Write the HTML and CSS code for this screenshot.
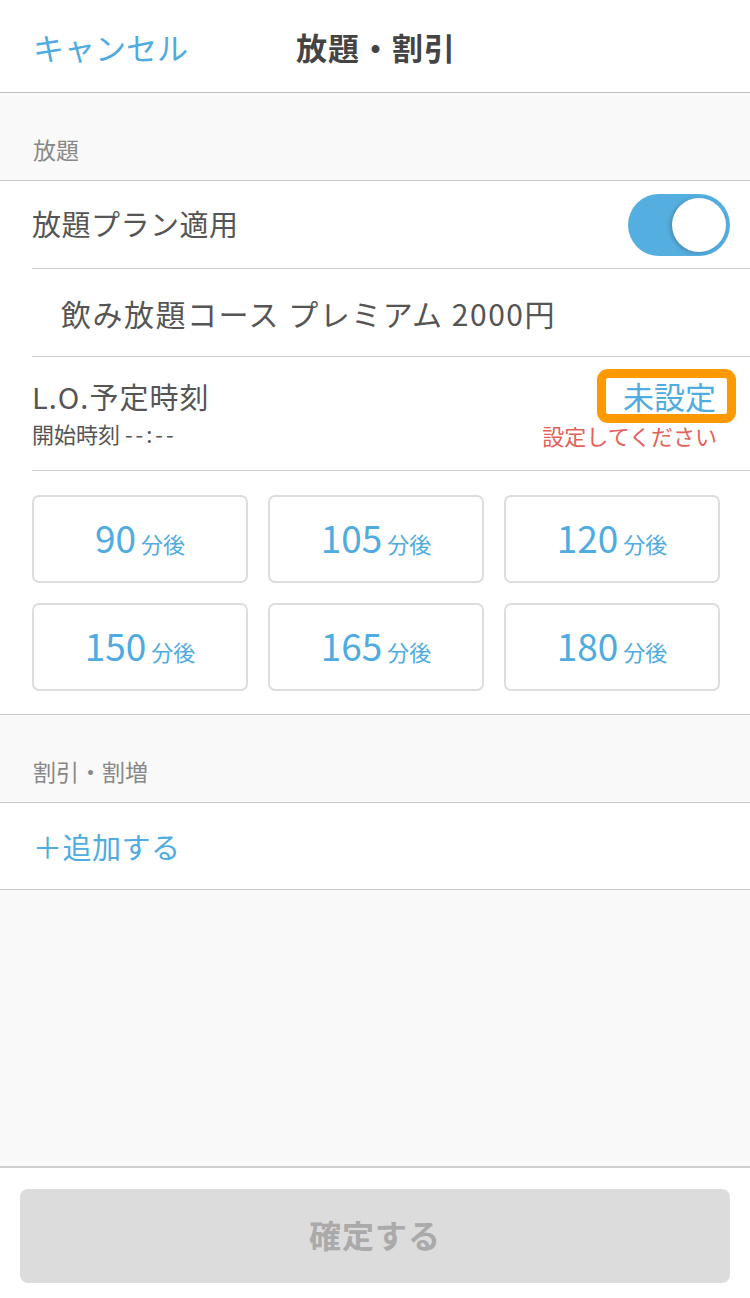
FILE: index.html
```html
<!DOCTYPE html>
<html lang="ja">
<head>
    <meta charset="UTF-8">
    <meta name="viewport" content="width=device-width, initial-scale=1.0">
    <title>放題・割引</title>
    <link rel="stylesheet" href="styles.css">
</head>
<body>
    <div class="screen">
        <header class="nav">
            <a class="nav-cancel">キャンセル</a>
            <h1 class="nav-title">放題・割引</h1>
        </header>

        <main class="content">
            <div class="section-head">放題</div>
            <div class="group">
                <div class="row row-toggle">
                    <span class="row-label">放題プラン適用</span>
                    <div class="toggle on"><div class="knob"></div></div>
                </div>
                <div class="row row-plan">
                    <span class="row-label">飲み放題コース プレミアム 2000円</span>
                </div>
                <div class="row row-lo">
                    <div class="lo-left">
                        <div class="row-label">L.O.予定時刻</div>
                        <div class="lo-sub">開始時刻 <span class="lo-time">--:--</span></div>
                    </div>
                    <div class="lo-right">
                        <span class="lo-value">未設定</span>
                        <span class="lo-warn">設定してください</span>
                    </div>
                </div>
                <div class="time-grid">
                    <button class="time-btn"><b>90</b>分後</button>
                    <button class="time-btn"><b>105</b>分後</button>
                    <button class="time-btn"><b>120</b>分後</button>
                    <button class="time-btn"><b>150</b>分後</button>
                    <button class="time-btn"><b>165</b>分後</button>
                    <button class="time-btn"><b>180</b>分後</button>
                </div>
            </div>

            <div class="section-head">割引・割増</div>
            <div class="group">
                <div class="row row-add">
                    <span class="add-link">＋追加する</span>
                </div>
            </div>
        </main>

        <footer class="footer">
            <button class="confirm" disabled>確定する</button>
        </footer>
    </div>
</body>
</html>
```

FILE: styles.css
```css
body {
    margin: 0;
    font-family: "Noto Sans CJK JP", "Noto Sans", sans-serif;
    color: #555;
}

.screen {
    width: 750px;
    height: 1298px;
    display: flex;
    flex-direction: column;
    background: #f9f9f9;
}

.nav {
    height: 92px;
    border-bottom: 1px solid #bdbdbd;
    background: #fff;
    display: flex;
    align-items: center;
    padding-left: 33px;
}

.nav-cancel {
    color: #4fabe0;
    font-size: 31px;
    width: 263px;
}

.nav-title {
    margin: 0;
    font-size: 31px;
    font-weight: bold;
    color: #444;
    letter-spacing: 1px;
}

.content {
    flex: 1;
    border-bottom: 2px solid #cfcfcf;
}

.section-head {
    height: 87px;
    box-sizing: border-box;
    padding: 39px 0 0 33px;
    font-size: 23px;
    color: #888;
}

.group {
    background: #fff;
    border-top: 1px solid #c8c8c8;
    border-bottom: 1px solid #c8c8c8;
}

.row {
    margin-left: 32px;
    border-bottom: 1px solid #cfcfcf;
    display: flex;
    align-items: center;
}

.row-label {
    font-size: 29px;
    color: #555;
    letter-spacing: 0.5px;
}

.row-toggle {
    height: 87px;
    justify-content: space-between;
    padding-right: 20px;
}

.row-toggle .row-label {
    margin-top: -3px;
}

.toggle {
    width: 102px;
    height: 62px;
    border-radius: 31px;
    background: #55aee0;
    position: relative;
}

.toggle .knob {
    position: absolute;
    right: 4px;
    top: 4px;
    width: 54px;
    height: 54px;
    border-radius: 50%;
    background: #fff;
    box-shadow: -2px 1px 4px rgba(0, 0, 0, 0.2);
}

.row-plan {
    height: 87px;
    padding-left: 29px;
}

.row-plan .row-label {
    font-size: 30px;
    letter-spacing: 1.5px;
}

.row-lo {
    height: 113px;
    justify-content: space-between;
    align-items: flex-start;
    padding-right: 33px;
}

.lo-left {
    padding-top: 18px;
}

.lo-left .row-label {
    letter-spacing: 1px;
}

.lo-sub {
    font-size: 22px;
    color: #555;
    margin-top: 0;
}

.lo-time {
    letter-spacing: 3px;
}

.lo-right {
    display: flex;
    flex-direction: column;
    align-items: flex-end;
    padding-top: 12px;
}

.lo-value {
    font-size: 31px;
    color: #4fabe0;
    border: 9px solid #ff9900;
    border-radius: 11px;
    padding: 0 11px 0 17px;
    line-height: 36px;
    margin-right: -19px;
}

.lo-warn {
    font-size: 22px;
    color: #e36058;
    margin-top: -2px;
    line-height: 28px;
}

.time-grid {
    display: grid;
    grid-template-columns: repeat(3, 216px);
    gap: 20px 20px;
    padding: 24px 0 23px 32px;
}

.time-btn {
    height: 88px;
    background: #fff;
    border: 2px solid #ddd;
    border-radius: 7px;
    color: #4fabe0;
    font-family: inherit;
    font-size: 22px;
    display: flex;
    align-items: baseline;
    justify-content: center;
    padding-top: 18px;
    box-sizing: border-box;
}

.time-btn b {
    font-weight: normal;
    font-size: 37px;
    margin-right: 5px;
    line-height: 44px;
}

.row-add {
    height: 86px;
    border-bottom: none;
    margin-left: 33px;
}

.add-link {
    font-size: 29px;
    color: #4fabe0;
    letter-spacing: 0.5px;
}

.footer {
    height: 130px;
    background: #fff;
    padding: 21px 20px 0;
    box-sizing: border-box;
}

.confirm {
    width: 710px;
    height: 94px;
    border: none;
    border-radius: 8px;
    background: #dcdcdc;
    color: #aaa;
    font-family: inherit;
    font-size: 32px;
    font-weight: bold;
    letter-spacing: 1px;
    padding-bottom: 6px;
}
```
